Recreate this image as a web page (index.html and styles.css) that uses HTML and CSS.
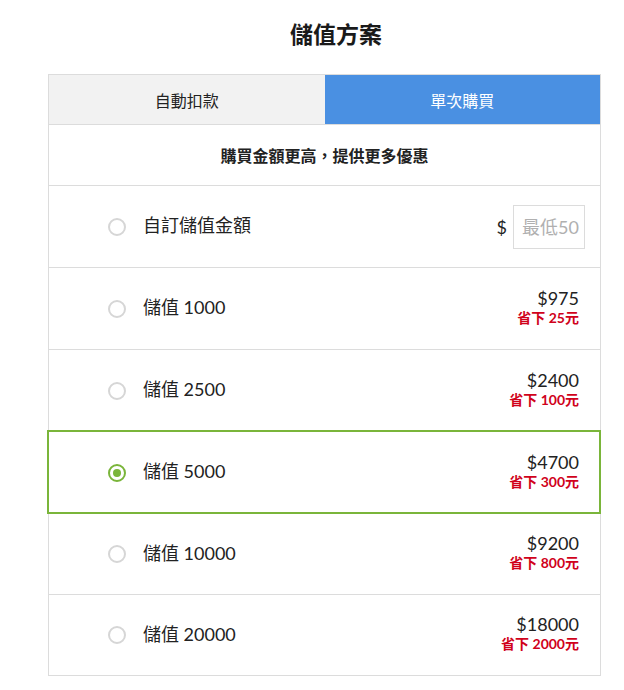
FILE: index.html
```html
<!DOCTYPE html>
<html lang="zh-Hant">
<head>
<meta charset="utf-8">
<title>儲值方案</title>
<link rel="stylesheet" href="styles.css">
</head>
<body>
<div class="page">
  <h1 class="title">儲值方案</h1>
  <div class="card">
    <div class="tabs">
      <div class="tab">自動扣款</div>
      <div class="tab tab-active">單次購買</div>
    </div>
    <div class="notice">購買金額更高，提供更多優惠</div>
    <div class="row">
      <span class="radio"></span>
      <span class="label">自訂儲值金額</span>
      <div class="custom">
        <span class="dollar">$</span>
        <input class="amount" type="text" placeholder="最低50">
      </div>
    </div>
    <div class="row">
      <span class="radio"></span>
      <span class="label">儲值 1000</span>
      <div class="price"><div class="cost">$975</div><div class="save">省下 25元</div></div>
    </div>
    <div class="row">
      <span class="radio"></span>
      <span class="label">儲值 2500</span>
      <div class="price"><div class="cost">$2400</div><div class="save">省下 100元</div></div>
    </div>
    <div class="row row-selected">
      <span class="radio radio-on"></span>
      <span class="label">儲值 5000</span>
      <div class="price"><div class="cost">$4700</div><div class="save">省下 300元</div></div>
    </div>
    <div class="row row-short">
      <span class="radio"></span>
      <span class="label">儲值 10000</span>
      <div class="price"><div class="cost">$9200</div><div class="save">省下 800元</div></div>
    </div>
    <div class="row row-short">
      <span class="radio"></span>
      <span class="label">儲值 20000</span>
      <div class="price"><div class="cost">$18000</div><div class="save">省下 2000元</div></div>
    </div>
  </div>
</div>
</body>
</html>
```

FILE: styles.css
```css
* { box-sizing: border-box; }

html, body {
  margin: 0;
  padding: 0;
  background: #fff;
}

body {
  font-family: "Lato", "Noto Sans CJK TC", sans-serif;
  color: #222;
}

.page {
  padding: 17px 23px 14px 48px;
}

.title {
  margin: 0 0 23px 0;
  padding-left: 23px;
  text-align: center;
  font-size: 23px;
  line-height: 34px;
  font-weight: 700;
  color: #1a1a1a;
}

.card {
  border: 1px solid #dcdcdc;
  border-bottom: none;
}

.tabs {
  display: grid;
  grid-template-columns: 1fr 1fr;
  height: 50px;
  border-bottom: 1px solid #dcdcdc;
}

.tab {
  display: flex;
  align-items: center;
  justify-content: center;
  background: #f2f2f2;
  font-size: 16px;
  color: #222;
}

.tab-active {
  background: #4a90e2;
  color: #fff;
}

.notice {
  height: 61px;
  display: flex;
  align-items: center;
  justify-content: center;
  font-size: 16px;
  font-weight: 700;
  border-bottom: 1px solid #dcdcdc;
}

.row {
  height: 82px;
  display: flex;
  align-items: center;
  padding: 0 21px 0 59px;
  border-bottom: 1px solid #dcdcdc;
}

.row-short {
  height: 81px;
}

.row-selected {
  position: relative;
}

.row-selected::before {
  content: "";
  position: absolute;
  top: -2px;
  left: -2px;
  right: -1px;
  bottom: -1px;
  border: 2px solid #7ab53a;
  pointer-events: none;
  z-index: 1;
}

.radio {
  width: 18px;
  height: 18px;
  border: 2px solid #d6d6d6;
  border-radius: 50%;
  flex: none;
  margin-right: 17px;
  display: flex;
  align-items: center;
  justify-content: center;
}

.radio-on {
  border-color: #7ab53a;
}

.radio-on::after {
  content: "";
  width: 8px;
  height: 8px;
  border-radius: 50%;
  background: #7ab53a;
}

.label {
  flex: 1;
  font-size: 18px;
  line-height: 22px;
  margin-top: -3px;
  color: #222;
}

.custom {
  display: flex;
  align-items: center;
  margin-right: -6px;
}

.dollar {
  font-size: 18px;
  margin-right: 6px;
}

.amount {
  width: 72px;
  height: 44px;
  border: 1px solid #dcdcdc;
  padding: 0 0 0 8px;
  font-family: "Lato", "Noto Sans CJK TC", sans-serif;
  font-size: 18px;
  color: #222;
  outline: none;
  background: #fff;
}

.amount::placeholder {
  color: #b0b0b0;
}

.price {
  text-align: right;
  margin-top: -3px;
}

.cost {
  font-size: 18px;
  line-height: 21px;
  color: #222;
}

.save {
  font-size: 14px;
  line-height: 18px;
  font-weight: 700;
  color: #d0021b;
}
```
